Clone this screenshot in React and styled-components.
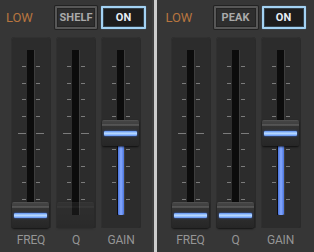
import React from "react";
import styled, { createGlobalStyle, css } from "styled-components";

const Global = createGlobalStyle`
  html, body { margin: 0; padding: 0; background: #cdcdcd; }
  body { font-family: Roboto, "Liberation Sans", sans-serif; }
`;

const Page = styled.div`
  display: flex;
  gap: 3px;
  width: 314px;
  height: 252px;
`;

const Panel = styled.section`
  box-sizing: border-box;
  width: ${(p) => p.$w}px;
  height: 252px;
  background: #363636;
  border-right: ${(p) => (p.$edge ? "2px solid #3e3e3e" : "none")};
  display: flex;
  flex-direction: column;
  align-items: center;
  padding-top: 5px;
`;

const Header = styled.div`
  width: 140px;
  display: flex;
  align-items: center;
  height: 24px;
`;

const Title = styled.span`
  color: #b7753f;
  font-size: 13px;
  letter-spacing: -0.2px;
  flex: 1;
  padding-top: 1px;
`;

const Button = styled.div`
  box-sizing: border-box;
  width: ${(p) => p.$w}px;
  height: 23px;
  margin-left: 4px;
  display: flex;
  align-items: center;
  justify-content: center;
  font-size: 11px;
  font-weight: 700;
  letter-spacing: 0.1px;
  border-radius: 1px;
  ${(p) =>
    p.$on
      ? css`
          background: #1d1d1d;
          color: #e6eef4;
          border: 2px solid #a3d2f3;
          box-shadow: inset 0 0 0 1px #34434e, 0 0 1px #6fa6d0;
        `
      : css`
          background: #2e2e2e;
          color: #a9a9a9;
          border: 2px solid #575757;
          box-shadow: 0 0 0 1px #222, inset 0 0 0 1px #242424;
        `}
`;

const Faders = styled.div`
  display: flex;
  gap: 5px;
  margin-top: 8px;
`;

const Column = styled.div`
  display: flex;
  flex-direction: column;
  align-items: center;
`;

const Track = styled.div`
  box-sizing: border-box;
  width: 40px;
  height: 191px;
  background: #2c2c2c;
  border-radius: 4px 4px 2px 2px;
  box-shadow: inset 0 1px 0 #313131, inset 1px 0 0 #303030, inset -1px 0 0 #2a2a2a;
  padding-top: 13px;
`;

const SlotArea = styled.div`
  position: relative;
  height: 165px;
`;

const Ticks = styled.div`
  position: absolute;
  left: 0;
  right: 0;
  top: 16px;
  bottom: 15px;
  display: flex;
  flex-direction: column;
  justify-content: space-between;
`;

const TickRow = styled.div`
  display: flex;
  justify-content: center;
  height: 1px;
  gap: 10px;
`;

const Dash = styled.div`
  height: 1px;
  width: ${(p) => (p.$major ? 8 : 4)}px;
  background: #8a8a8a;
  opacity: 0.85;
`;

const Slot = styled.div`
  position: absolute;
  top: 0;
  bottom: 0;
  left: 50%;
  width: 7px;
  margin-left: -4px;
  background: #0c0c0c;
  box-shadow: 1px 0 0 #3d3d3d;
`;

const Fill = styled.div`
  position: absolute;
  bottom: 0;
  left: 50%;
  width: 6px;
  margin-left: -3px;
  background: linear-gradient(90deg, #4a74dc, #86a9ff 50%, #4a74dc);
  border-radius: 1px;
`;

const Knob = styled.div`
  position: absolute;
  left: 50%;
  width: 37px;
  height: 26px;
  margin-left: -19px;
  margin-top: -13px;
  box-sizing: border-box;
  border-radius: 2px;
  background: linear-gradient(
    180deg,
    #5a5a5a 0px,
    #454545 1px,
    #3f3f3f 4px,
    #6a6a6a 5px,
    #343434 6px,
    #2d2d2d 60%,
    #262626 100%
  );
  box-shadow: 0 1px 2px rgba(0, 0, 0, 0.7);
  padding-top: 11px;
  opacity: ${(p) => (p.$disabled ? 0.28 : 1)};
`;

const Glow = styled.div`
  height: 5px;
  margin: 0 2px;
  border-radius: 1px;
  background: linear-gradient(180deg, #5c8ff0, #b9dbff 45%, #a9cdff 60%, #5c8ff0);
  box-shadow: 0 0 2px #3c6ee0;
`;

const Label = styled.div`
  margin-top: 5px;
  color: #959595;
  font-size: 12px;
  line-height: 14px;
  letter-spacing: -0.2px;
`;

const SLOT = 165;
const TICKS = [0, 1, 2, 3, 4, 5, 6, 7, 8];

function Fader({ label, value, fill, disabled }) {
  const y = SLOT * (1 - value);
  return (
    <Column>
      <Track>
        <SlotArea>
          <Ticks>
            {TICKS.map((i) => (
              <TickRow key={i}>
                <Dash $major={i === 4} />
                <Dash $major={i === 4} />
              </TickRow>
            ))}
          </Ticks>
          <Slot />
          {fill && <Fill style={{ top: y }} />}
          <Knob style={{ top: y }} $disabled={disabled}>
            {!disabled && <Glow />}
          </Knob>
        </SlotArea>
      </Track>
      <Label>{label}</Label>
    </Column>
  );
}

function EqPanel({ width, mode, modeW, onW, qDisabled, edge }) {
  return (
    <Panel $w={width} $edge={edge}>
      <Header>
        <Title>LOW</Title>
        <Button $w={modeW}>{mode}</Button>
        <Button $w={onW} $on>
          ON
        </Button>
      </Header>
      <Faders>
        <Fader label="FREQ" value={0} />
        <Fader label="Q" value={0} disabled={qDisabled} />
        <Fader label="GAIN" value={0.5} fill />
      </Faders>
    </Panel>
  );
}

export default function App() {
  return (
    <>
      <Global />
      <Page>
        <EqPanel width={154} mode="SHELF" modeW={42} onW={45} qDisabled edge />
        <EqPanel width={157} mode="PEAK" modeW={44} onW={44} />
      </Page>
    </>
  );
}
